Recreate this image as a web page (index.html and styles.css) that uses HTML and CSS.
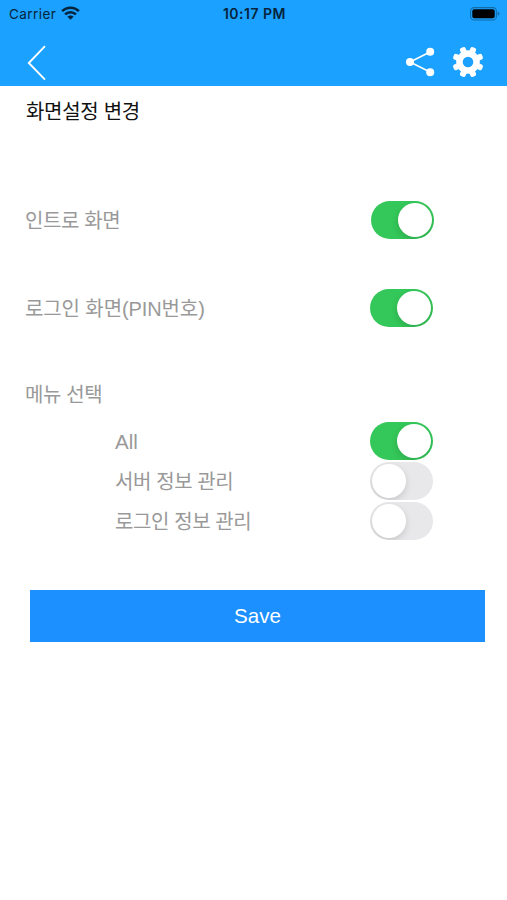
FILE: index.html
```html
<!DOCTYPE html>
<html lang="ko">
<head>
<meta charset="utf-8">
<title>화면설정 변경</title>
<link rel="stylesheet" href="styles.css">
</head>
<body>
<header class="header">
  <div class="status">
    <div class="carrier"><span>Carrier</span>
      <svg width="19" height="14" viewBox="0 0 20 14" fill="none" stroke="#06243b" stroke-width="2.7"><path d="M1.2 5.1a12.3 12.3 0 0 1 17.6 0M4.3 8.5a8 8 0 0 1 11.4 0"/><path d="M10 14 6.7 10.9a4.7 4.7 0 0 1 6.6 0z" fill="#06243b" stroke="none"/></svg>
    </div>
    <div class="time">10:17 PM</div>
    <svg class="battery" width="30" height="14" viewBox="0 0 30 14"><rect x=".6" y=".6" width="25.8" height="12.4" rx="3.6" fill="none" stroke="#126ca8" stroke-width="1.1"/><rect x="2.3" y="2.3" width="22.4" height="9" rx="2" fill="#000"/><path d="M27.7 4.8q2 .8 2 2t-2 2z" fill="#126ca8"/></svg>
  </div>
  <nav class="nav">
    <svg class="back" width="20" height="36" viewBox="0 0 20 36" fill="none" stroke="#fff" stroke-width="1.9"><path d="M18 1.2 1.8 18 18 34.6"/></svg>
    <div class="actions">
      <svg width="30" height="30" viewBox="0 0 30 30" fill="#fff"><path d="M25 5 5 15l20 10" fill="none" stroke="#fff" stroke-width="1.6"/><circle cx="25.2" cy="4.8" r="4"/><circle cx="5" cy="15" r="4"/><circle cx="25.2" cy="25.2" r="4"/></svg>
      <svg width="32" height="32" viewBox="-16 -16 32 32"><g fill="#fff"><circle r="11.8"/><rect x="-3" y="-15.6" width="6" height="31.2" rx="2" transform="rotate(22.5)"/><rect x="-3" y="-15.6" width="6" height="31.2" rx="2" transform="rotate(67.5)"/><rect x="-3" y="-15.6" width="6" height="31.2" rx="2" transform="rotate(112.5)"/><rect x="-3" y="-15.6" width="6" height="31.2" rx="2" transform="rotate(157.5)"/></g><circle r="5.3" fill="#1ba1ff"/></svg>
    </div>
  </nav>
</header>
<main>
  <h1>화면설정 변경</h1>
  <div class="row intro"><span>인트로 화면</span><i class="switch on"></i></div>
  <div class="row login"><span>로그인 화면(PIN번호)</span><i class="switch on"></i></div>
  <div class="row menu"><span>메뉴 선택</span></div>
  <div class="options">
    <div class="row all"><span>All</span><i class="switch on"></i></div>
    <div class="row"><span>서버 정보 관리</span><i class="switch"></i></div>
    <div class="row"><span>로그인 정보 관리</span><i class="switch"></i></div>
  </div>
  <button class="save">Save</button>
</main>
</body>
</html>
```
FILE: styles.css
```css
* { box-sizing: border-box; }
body {
  margin: 0;
  min-height: 900px;
  background: #fff;
  font-family: "Liberation Sans", "Noto Sans CJK KR", sans-serif;
}
.header { height: 86px; background: #1ba1ff; }
svg { display: block; }
.status {
  height: 27px;
  padding: 0 7px 0 9px;
  display: grid;
  grid-template-columns: 1fr auto 1fr;
  align-items: center;
  font-family: Inter, sans-serif;
  font-size: 13.5px;
  letter-spacing: 0.45px;
  color: #06243b;
}
.carrier { display: flex; align-items: center; gap: 5px; }
.carrier svg { margin-top: -2px; }
.time {
  font-weight: 600;
  font-size: 14px;
  letter-spacing: 0.5px;
}
.battery { justify-self: end; }
.nav {
  height: 59px;
  padding: 11px 23px 0 27px;
  display: flex;
  align-items: center;
  justify-content: space-between;
}
.back { margin-top: 2px; }
.actions { display: flex; align-items: center; gap: 17px; }
main { padding: 0 22px 0 26px; }
h1 {
  margin: 0;
  padding-top: 1px;
  height: 50px;
  line-height: 51px;
  font-size: 20px;
  font-weight: 400;
  letter-spacing: -0.3px;
  color: #111;
}
.row {
  height: 40px;
  padding-right: 52px;
  display: flex;
  align-items: center;
  justify-content: space-between;
  font-size: 20px;
  letter-spacing: -0.4px;
  color: #999;
  white-space: nowrap;
}
.row > span { margin: -1px 0 0 -1px; }
.intro { margin-top: 64px; padding-right: 51px; }
.login { margin-top: 48px; }
.login > span { letter-spacing: -0.1px; }
.menu { margin-top: 46px; }
.options { margin-top: 7px; padding-left: 90px; }
.all > span { margin-top: 1px; font-size: 20.5px; letter-spacing: 0; }
.switch {
  width: 63px;
  height: 38px;
  padding: 2px;
  border-radius: 19px;
  background: #e8e8ea;
  display: flex;
  overflow: hidden;
}
.switch::after {
  content: "";
  width: 34px;
  height: 34px;
  border-radius: 50%;
  background: #fff;
  box-shadow: 0 3px 7px rgba(0, 0, 0, 0.14);
}
.switch.on { background: #34c759; justify-content: flex-end; }
.save {
  display: block;
  width: 455px;
  height: 52px;
  margin: 49px 0 0 4px;
  padding: 0;
  border: 0;
  background: #1c90ff;
  color: #fff;
  font: 20.6px "Liberation Sans", sans-serif;
}
```
